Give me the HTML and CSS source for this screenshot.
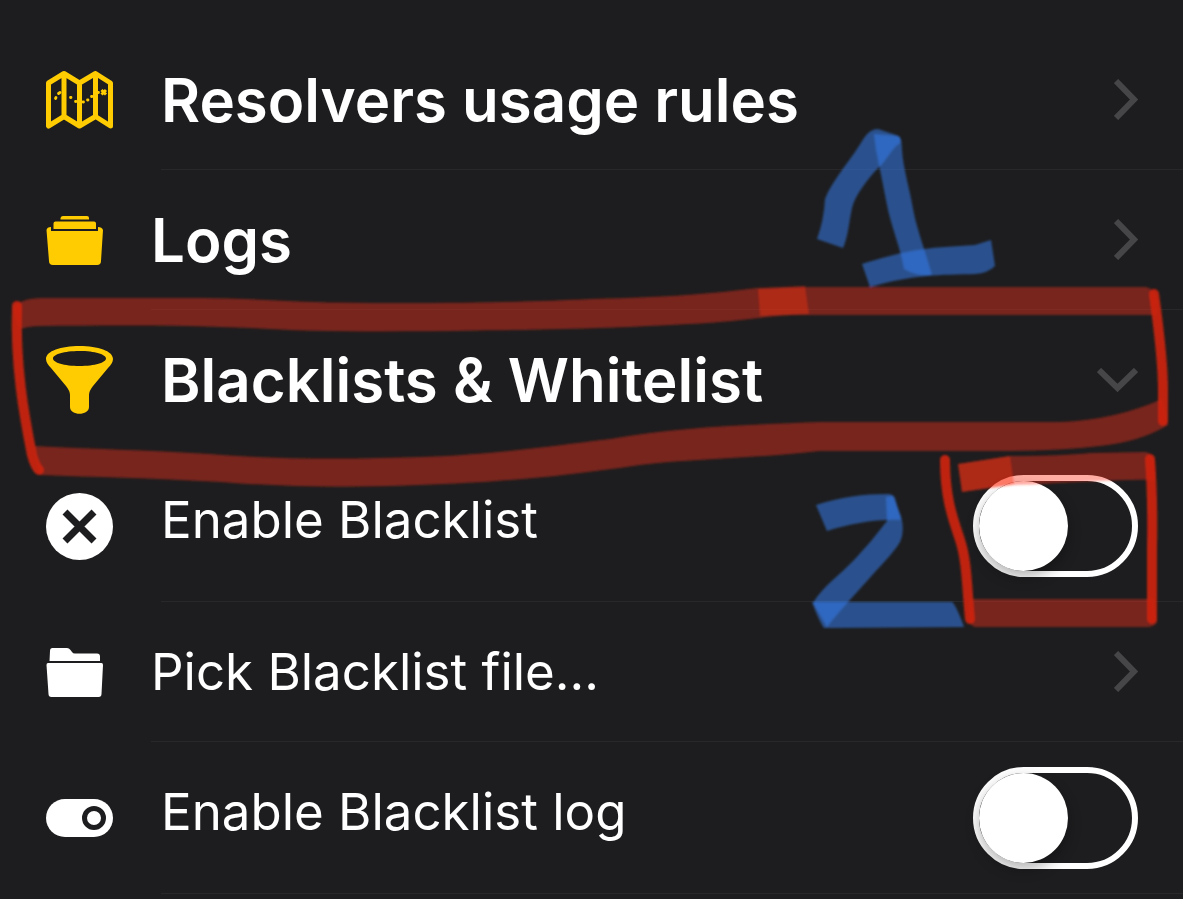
FILE: index.html
```html
<!DOCTYPE html>
<html lang="en">
<head>
<meta charset="utf-8">
<meta name="viewport" content="width=device-width, initial-scale=1">
<title>Settings</title>
<link rel="stylesheet" href="styles.css">
</head>
<body>
<main class="settings">
  <ul class="list">
    <li>
      <a class="row" href="#rules">
        <svg class="icon icon-wide accent" viewBox="0 0 67 58" height="58" aria-hidden="true">
          <path d="M2.500 12 18 2.500 33.500 12 49.500 2.500 64.500 12V55L49.500 45.500 33.500 55 18 45.500 2.500 55ZM18 3V45M33.500 12V55M49.500 3V45" fill="none" stroke="currentColor" stroke-width="5" stroke-linejoin="round"/>
          <path d="M9.500 27.500 10 26.500M12.500 22.500 14 21.500M24.500 26.500H25M29.500 30.500H30M37 31H37.500M41.500 29H42M45.500 25.500H46M52 21.500H52.500" fill="none" stroke="currentColor" stroke-width="2.800" stroke-linecap="round"/>
          <path d="M55.500 19 60 23.500M60 19 55.500 23.500" fill="none" stroke="currentColor" stroke-width="3"/>
        </svg>
        <span class="body"><span class="title">Resolvers usage rules</span>
          <svg class="chevron" viewBox="0 0 24 41" width="24" height="41" aria-hidden="true"><path d="M2 2 20 20.500 2 39"/></svg>
        </span>
      </a>
    </li>
    <li>
      <a class="row" href="#logs">
        <svg class="icon icon-narrow accent" viewBox="0 0 57 49" height="49" aria-hidden="true">
          <path d="M17 0H41Q43 0 43 2V3.500H14.500V2Q15 0 17 0ZM9.500 5.500H48Q50 5.500 50 7.500V13H7.500V7.500Q7.500 5.500 9.500 5.500Z" fill="currentColor"/>
          <path d="M0.500 14Q1 11 5 11V15H52V11Q56 11 57 14L55 45Q55 49 51 49H7Q3 49 3 45Z" fill="currentColor"/>
        </svg>
        <span class="body"><span class="title">Logs</span>
          <svg class="chevron" viewBox="0 0 24 41" width="24" height="41" aria-hidden="true"><path d="M2 2 20 20.500 2 39"/></svg>
        </span>
      </a>
    </li>
    <li>
      <button class="row" type="button" aria-expanded="true" aria-controls="blacklist">
        <svg class="icon icon-wide accent" viewBox="0 0 67 68" height="68" aria-hidden="true">
          <path fill="currentColor" fill-rule="evenodd" d="M33.500 0C52 0 67 5 67 13C67 16 65 19 62 22L47 40Q43 45 43 49V61C43 70 24 70 24 61V49Q24 45 20 40L5 22C2 19 0 16 0 13C0 5 15 0 33.500 0ZM33.500 5C18 5 7 8.500 7 12.500S18 20 33.500 20S60 16.500 60 12.500S49 5 33.500 5Z"/>
        </svg>
        <span class="body body-open"><span class="title">Blacklists &amp; Whitelist</span>
          <svg class="chevron" viewBox="0 0 41 24" width="41" height="24" aria-hidden="true"><path d="M2 2 20.500 20 39 2"/></svg>
        </span>
      </button>
    </li>
  </ul>
  <ul class="list" id="blacklist">
    <li>
      <label class="row row-switch" for="enable-blacklist">
        <svg class="icon icon-wide" viewBox="0 0 67 67" height="67" aria-hidden="true">
          <circle cx="33.500" cy="33.500" r="33.500" fill="currentColor"/>
          <path class="cut" d="M19 19 48 48M48 19 19 48" stroke-width="7"/>
        </svg>
        <span class="body"><span class="subtitle">Enable Blacklist</span>
          <input class="switch" type="checkbox" role="switch" id="enable-blacklist">
        </span>
      </label>
    </li>
    <li>
      <a class="row" href="#pick">
        <svg class="icon icon-narrow" viewBox="0 0 57 49" height="49" aria-hidden="true">
          <path d="M4 3Q4 0 6.500 0H21Q23 0 24.500 2L26 4Q27 5.500 29 5.500H51Q54 5.500 54 8.500V13H3.500ZM2 15H55.500Q57 15 57 17L55.500 46Q55.500 49 52.500 49H5.500Q2.500 49 2.500 46L0.500 17Q0.500 15 2 15Z" fill="currentColor"/>
        </svg>
        <span class="body"><span class="subtitle">Pick Blacklist file...</span>
          <svg class="chevron" viewBox="0 0 24 41" width="24" height="41" aria-hidden="true"><path d="M2 2 20 20.500 2 39"/></svg>
        </span>
      </a>
    </li>
    <li>
      <label class="row row-switch" for="enable-log">
        <svg class="icon icon-wide" viewBox="0 0 67 38" height="38" aria-hidden="true">
          <rect width="67" height="38" rx="19" fill="currentColor"/>
          <circle class="cut" cx="48" cy="19" r="9.500" stroke-width="5"/>
        </svg>
        <span class="body"><span class="subtitle">Enable Blacklist log</span>
          <input class="switch" type="checkbox" role="switch" id="enable-log">
        </span>
      </label>
    </li>
  </ul>
  <svg class="marker" viewBox="0 0 1183 899" aria-hidden="true">
    <defs><filter id="soft" x="-5%" y="-5%" width="110%" height="110%"><feGaussianBlur stdDeviation="1.300"/></filter></defs>
    <g filter="url(#soft)">
      <g class="marker-blue">
        <path d="M817 239Q824 220 825 199C832 180 852 159 864 138Q870 129 878 129L896 135Q903 138 900 143C890 150 886 162 878 168C868 179 855 195 852 208C849 222 848 237 843 248Z"/>
        <path d="M874 134 899 136Q902 140 902 150C903 168 910 190 913 209C917 230 925 250 932 275Q918 277 904 269C900 246 891 226 887 205C883 184 879 165 876 150Z"/>
        <path d="M862 264C885 257 910 249 945 247L975 245 991 240 995 266Q988 273 975 274C940 275 915 274 870 287Z"/>
        <path d="M816 505C840 497 865 494 888 494Q893 494 895 498L901 520C875 519 850 524 827 531Z"/>
        <path d="M886 497 893 496 901 516Q905 532 900 542C892 555 878 568 867 581C853 597 840 610 827 627L813 603C822 587 840 575 855 559Q872 541 887 521Z"/>
        <path d="M812 602H952Q956 605 964 627L824 628Q819 621 812 602Z"/>
      </g>
      <g class="marker-red">
        <path d="M13 309Q20 298 42 298H200C250 298 290 302 340 302.500C430 304 530 302 590 299C670 297 710 294 757 288L805 286 809 314C760 316 740 322 690 324C600 329 530 330 480 330.500C390 332 310 332 250 328C190 325 110 325 42 326Q30 326 20 329Z"/>
        <path d="M758 289 805 287H1146Q1154 288 1157 300L1156 315H780L760 316Z"/>
        <path d="M34 446C90 449 150 450 210 454C280 460 360 459 420 457C500 454 550 446 610 439C680 427 740 425 820 422H1060Q1115 420 1162 399L1168 425Q1140 442 1100 446Q1060 451 1000 451H820C750 459 700 458 640 465C560 477 500 482 420 485C350 488 280 487 220 482C150 478 90 477 40 475Z"/>
        <path d="M958 464 1010 456Q1060 456 1090 453L1146 452Q1153 453 1155 466V480C1110 479 1060 484 1013 485L962 492Z"/>
        <path d="M958 464 1010 456 1014 484 962 492Z"/>
        <path d="M970 599H1153L1157 622Q1155 627 1146 627H976Q969 627 969 614Z"/>
      </g>
      <g class="marker-edge">
        <path d="M17 306C15 365 24 415 32 455Q35 466 39 470"/>
        <path d="M1154 294C1159 330 1163 365 1163 390V421"/>
        <path d="M945 460C945 498 953 519 960 540C967 560 967 590 970 619"/>
        <path d="M1150 459Q1153 500 1152 550V619"/>
      </g>
    </g>
  </svg>
</main>
</body>
</html>
```
FILE: styles.css
```css
* {
  box-sizing: border-box;
}

body {
  margin: 0;
  background: #1d1d1f;
  color: #fff;
  font-family: Inter, "Liberation Sans", sans-serif;
}

.settings {
  position: relative;
  padding-top: 30px;
}

.list {
  margin: 0;
  padding: 0;
  list-style: none;
}

.row {
  display: flex;
  align-items: stretch;
  gap: 48px;
  width: 100%;
  min-height: 140px;
  padding: 0 0 0 46px;
  border: 0;
  background: none;
  color: inherit;
  font: inherit;
  text-align: left;
  text-decoration: none;
  cursor: pointer;
}

.row-switch {
  min-height: 152px;
}

.icon {
  flex: none;
  align-self: center;
}

.icon-wide {
  width: 67px;
}

.icon-narrow {
  width: 57px;
}

.accent {
  color: #ffcc02;
}

.cut {
  fill: none;
  stroke: #1d1d1f;
}

.body {
  display: flex;
  flex: 1;
  align-items: center;
  justify-content: space-between;
  padding-right: 45px;
  border-bottom: 1px solid #28282a;
}

.body-open {
  border-bottom-color: transparent;
}

.title {
  font-size: 60px;
  font-weight: 600;
  line-height: 72px;
}

.subtitle {
  font-size: 51px;
  line-height: 64px;
}

.row-switch .subtitle {
  padding-bottom: 12px;
}

.chevron {
  flex: none;
  fill: none;
  stroke: #464648;
  stroke-width: 6px;
}

.switch {
  flex: none;
  appearance: none;
  width: 165px;
  height: 102px;
  margin: 0;
  border: 6px solid #fff;
  border-radius: 51px;
  cursor: pointer;
}

.switch::before {
  content: "";
  display: block;
  width: 89px;
  height: 90px;
  border-radius: 50%;
  background: #fff;
  box-shadow: 0 6px 14px rgba(0, 0, 0, 0.3);
}

.switch:checked {
  background: #ffcc02;
}

.switch:checked::before {
  margin-left: auto;
}

.marker {
  position: absolute;
  top: 0;
  left: 0;
  width: 100%;
  pointer-events: none;
}

.marker-blue {
  fill: #367ce9;
  fill-opacity: 0.55;
}

.marker-red {
  fill: #ff3016;
  fill-opacity: 0.4;
}

.marker-edge {
  fill: none;
  stroke: #d0260e;
  stroke-width: 10px;
  stroke-linecap: round;
  stroke-opacity: 0.9;
}
```
